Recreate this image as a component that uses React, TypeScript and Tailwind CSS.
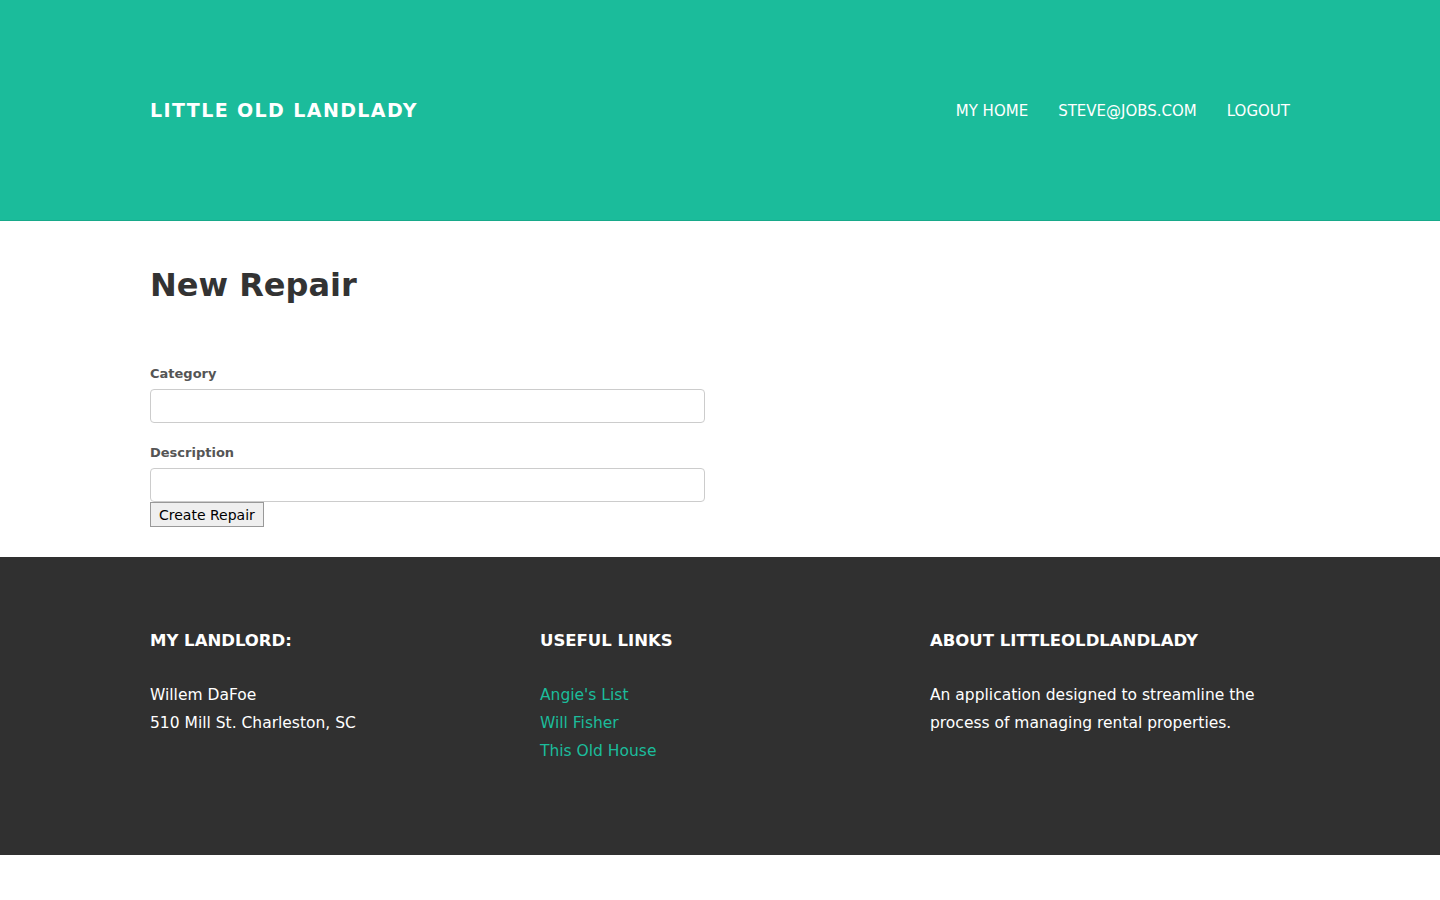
import React from 'react';

const App: React.FC = () => {
    return (
        <div className="min-h-[900px] bg-white font-['DejaVu_Sans',sans-serif]">
            <header className="h-[221px] bg-[#1bbc9b] border-b border-[#17a98a]">
                <div className="w-[1140px] mx-auto h-full flex items-center justify-between text-white">
                    <div className="text-[19px] font-bold tracking-[1.4px] uppercase">Little Old Landlady</div>
                    <ul className="flex items-center gap-[30px] pt-[2px] text-[15px] uppercase">
                        <li>My Home</li>
                        <li>steve@jobs.com</li>
                        <li>Logout</li>
                    </ul>
                </div>
            </header>

            <main className="w-[1140px] mx-auto pt-[46px] pb-[30px]">
                <h1 className="text-[32px] font-bold text-[#333] leading-[36px]">New Repair</h1>
                <form className="mt-[61px] w-[555px]">
                    <label className="block text-[13px] leading-[20px] font-bold text-[#555] mb-[5px]">Category</label>
                    <input type="text" className="block w-full h-[34px] border border-[#ccc] rounded-[4px]" />
                    <label className="block text-[13px] leading-[20px] font-bold text-[#555] mt-[20px] mb-[5px]">Description</label>
                    <input type="text" className="block w-full h-[34px] border border-[#ccc] rounded-[4px]" />
                    <button type="button" className="block h-[25px] px-[8px] text-[14px] leading-[20px] text-black bg-[#efefef] border border-[#999]">
                        Create Repair
                    </button>
                </form>
            </main>

            <footer className="h-[298px] bg-[#303030] text-white">
                <div className="w-[1140px] mx-auto pt-[72px] grid grid-cols-3 gap-x-[30px]">
                    <div>
                        <h3 className="text-[16.5px] leading-[24px] font-bold uppercase">My Landlord:</h3>
                        <p className="mt-[28px] text-[15.5px] leading-[28px]">Willem DaFoe<br />510 Mill St. Charleston, SC</p>
                    </div>
                    <div>
                        <h3 className="text-[16.5px] leading-[24px] font-bold uppercase">Useful Links</h3>
                        <ul className="mt-[28px] text-[15.5px] leading-[28px] text-[#1bbc9b]">
                            <li>Angie's List</li>
                            <li>Will Fisher</li>
                            <li>This Old House</li>
                        </ul>
                    </div>
                    <div>
                        <h3 className="text-[16.5px] leading-[24px] font-bold uppercase">About LittleOldLandlady</h3>
                        <p className="mt-[28px] text-[15.5px] leading-[28px] pr-[10px]">An application designed to streamline the process of managing rental properties.</p>
                    </div>
                </div>
            </footer>
        </div>
    );
};

export default App;
